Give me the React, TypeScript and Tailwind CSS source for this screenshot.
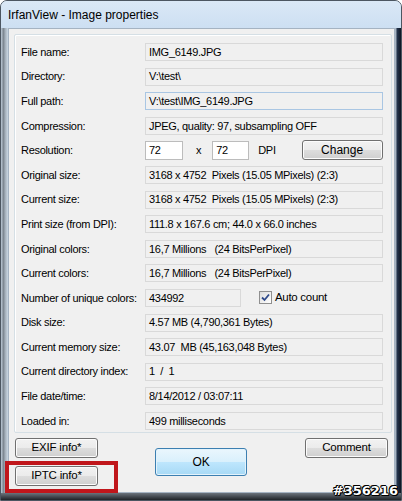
import React from "react";

const font = "font-['Liberation_Sans',Arial,sans-serif]";

type Row = { label: string; value?: string; focus?: boolean; kind?: "res" | "count" };

const rows: Row[] = [
  { label: "File name:", value: "IMG_6149.JPG" },
  { label: "Directory:", value: "V:\\test\\" },
  { label: "Full path:", value: "V:\\test\\IMG_6149.JPG", focus: true },
  { label: "Compression:", value: "JPEG, quality: 97, subsampling OFF" },
  { label: "Resolution:", kind: "res" },
  { label: "Original size:", value: "3168 x 4752  Pixels (15.05 MPixels) (2:3)" },
  { label: "Current size:", value: "3168 x 4752  Pixels (15.05 MPixels) (2:3)" },
  { label: "Print size (from DPI):", value: "111.8 x 167.6 cm; 44.0 x 66.0 inches" },
  { label: "Original colors:", value: "16,7 Millions   (24 BitsPerPixel)" },
  { label: "Current colors:", value: "16,7 Millions   (24 BitsPerPixel)" },
  { label: "Number of unique colors:", kind: "count" },
  { label: "Disk size:", value: "4.57 MB (4,790,361 Bytes)" },
  { label: "Current memory size:", value: "43.07  MB (45,163,048 Bytes)" },
  { label: "Current directory index:", value: "1  /  1" },
  { label: "File date/time:", value: "8/14/2012 / 03:07:11" },
  { label: "Loaded in:", value: "499 milliseconds" },
];

function Field({ children, focus, className = "" }: { children: React.ReactNode; focus?: boolean; className?: string }) {
  return (
    <div
      className={`h-[18px] flex items-center pl-[3px] whitespace-pre border bg-[#f0f0f0] ${
        focus ? "border-[#a9c6e3]" : "border-[#d9d9d9]"
      } ${className}`}
    >
      {children}
    </div>
  );
}

function Button({ children, className = "", primary }: { children: React.ReactNode; className?: string; primary?: boolean }) {
  return (
    <div
      className={`flex items-center justify-center rounded-[3px] border ${
        primary
          ? "border-[#3c7fb1] bg-[linear-gradient(#eaf6fd_0%,#d9f0fc_50%,#bee6fd_51%,#a7d9f5_100%)] shadow-[inset_0_0_0_1px_#e3f3fc]"
          : "border-[#707070] bg-[linear-gradient(#f2f2f2_0%,#ebebeb_50%,#dddddd_51%,#cfcfcf_100%)] shadow-[inset_0_0_0_1px_#fcfcfc]"
      } ${className}`}
    >
      {children}
    </div>
  );
}

function Checkbox() {
  return (
    <div className="w-[13px] h-[13px] border border-[#8f8f8f] bg-[linear-gradient(135deg,#dcdcdc,#ffffff)] flex items-center justify-center">
      <svg width="9" height="9" viewBox="0 0 9 9">
        <path d="M1 4.5 L3.5 7 L8 1.5" fill="none" stroke="#2f4a8a" strokeWidth="1.8" />
      </svg>
    </div>
  );
}

function RowView({ row }: { row: Row }) {
  return (
    <div className="flex items-center h-[18px]">
      <div className="w-[124px] shrink-0 whitespace-nowrap">{row.label}</div>
      {row.kind === "res" ? (
        <div className="flex items-center">
          <div className="w-[38px] h-[19px] border border-[#bcbcbc] bg-white flex items-center pl-[3px]">72</div>
          <span className="ml-[13px]">x</span>
          <div className="ml-[11px] w-[37px] h-[19px] border border-[#bcbcbc] bg-white flex items-center pl-[3px]">72</div>
          <span className="ml-[9px]">DPI</span>
          <Button className="ml-[26px] w-[81px] h-[20px] text-[12px] tracking-normal">Change</Button>
        </div>
      ) : row.kind === "count" ? (
        <div className="flex items-center">
          <Field className="w-[96px]">434992</Field>
          <div className="ml-[18px]">
            <Checkbox />
          </div>
          <span className="ml-[3px] text-[11.5px]">Auto count</span>
        </div>
      ) : (
        <Field focus={row.focus} className="w-[238px]">
          {row.value}
        </Field>
      )}
    </div>
  );
}

export default function App() {
  return (
    <div className={`${font} relative w-[402px] h-[501px] text-black overflow-hidden`}>
      {/* glass frame */}
      <div className="w-full h-full rounded-t-[7px] border border-[#4c5661] bg-[linear-gradient(180deg,#cfe0f2_0%,#c7d9ec_30%,#b9c8d6_60%,#9aa6b2_90%,#3a3f45_100%)] flex flex-col">
        <div className="h-[27px] shrink-0 flex items-center pl-[7px] text-[12px] bg-[linear-gradient(180deg,#dae8f6,#cddff2)] rounded-t-[6px]">
          IrfanView - Image properties
        </div>
        <div className="flex flex-1 min-h-0">
          <div className="w-[7px] shrink-0 bg-[linear-gradient(90deg,#bcc9d6_0%,#7d8791_35%,#a4afba_60%,#cbd8e4_100%)]" />
          <div className="flex-1 bg-[#f0f0f0] border border-[#a5b3c2] flex flex-col">
            {/* group box */}
            <div className="mt-[5px] ml-[5px] mr-[2px] h-[399px] border border-[#d5dfe5] rounded-[2px] shadow-[inset_1px_1px_0_#ffffff] pl-[6px] pt-[8px] flex flex-col gap-[6.6px] text-[11px] tracking-[-0.3px]">
              {rows.map((r) => (
                <RowView key={r.label} row={r} />
              ))}
            </div>
            {/* bottom buttons */}
            <div className="flex mt-[5px] text-[11.5px] tracking-[-0.2px]">
              <div className="ml-[6px] flex flex-col gap-[8px]">
                <Button className="w-[83px] h-[20px]">EXIF info*</Button>
                <Button className="w-[83px] h-[20px]">IPTC info*</Button>
              </div>
              <Button primary className="ml-[57px] mt-[10px] w-[92px] h-[28px] text-[12px]">
                OK
              </Button>
              <Button className="ml-[58px] w-[83px] h-[20px]">Comment</Button>
            </div>
          </div>
          <div className="w-[6px] shrink-0 bg-[linear-gradient(90deg,#c9d6e2_0%,#22324a_40%,#0d1522_100%)]" />
        </div>
        <div className="h-[7px] shrink-0 bg-[linear-gradient(180deg,#6b737c,#1f2328)]" />
      </div>

      {/* annotation around IPTC button */}
      <div className="absolute left-[5px] top-[461px] w-[113px] h-[32px] border-[4px] border-[#c0161b]" />

      {/* watermark */}
      <div className="absolute right-[4px] bottom-[1px] text-[13px] font-bold text-white font-['DejaVu_Sans',sans-serif] [text-shadow:1px_0_0_#000,-1px_0_0_#000,0_1px_0_#000,0_-1px_0_#000,1px_1px_0_#000,-1px_-1px_0_#000]">
        #356216
      </div>
    </div>
  );
}
